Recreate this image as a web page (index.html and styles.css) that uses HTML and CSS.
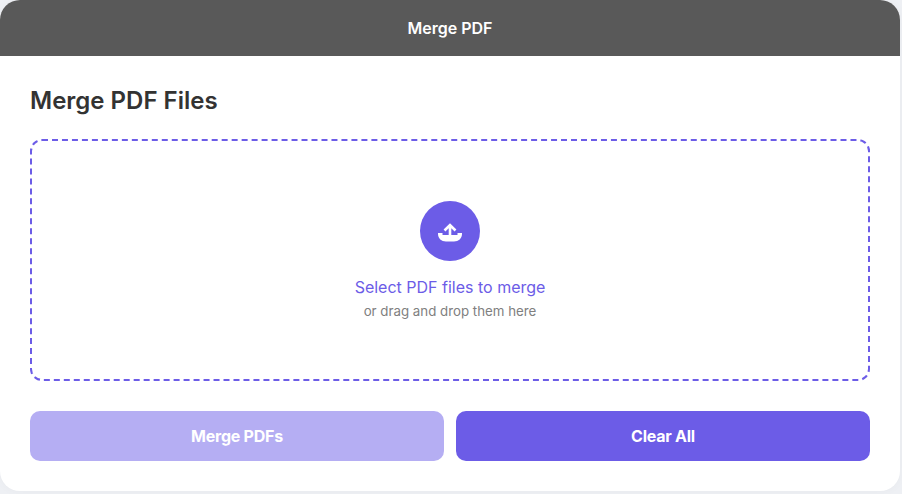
FILE: index.html
```html
<!DOCTYPE html>
<html lang="en">
<head>
    <meta charset="UTF-8">
    <meta name="viewport" content="width=device-width, initial-scale=1.0">
    <title>Merge PDF</title>
    <link rel="stylesheet" href="styles.css">
</head>
<body>

<div class="card">
    <div class="card-header">Merge PDF</div>

    <div class="card-body">
        <h2>Merge PDF Files</h2>

        <!-- Upload area -->
        <div class="drop-zone">
            <div class="upload-icon">
                <svg width="26" height="22" viewBox="0 0 26 22">
                    <path d="M1 13h4.500v2h15v-2H25v1c0 4.500-3.500 7.500-8 7.500H9c-4.500 0-8-3-8-7.500z" fill="#fff"/>
                    <path d="M13 16V5.500M7.500 10.500L13 5l5.500 5.500" fill="none" stroke="#fff" stroke-width="2.600"/>
                </svg>
            </div>
            <p class="drop-title">Select PDF files to merge</p>
            <p class="drop-hint">or drag and drop them here</p>
        </div>

        <!-- Buttons -->
        <div class="actions">
            <button type="button" class="btn btn-disabled">Merge PDFs</button>
            <button type="button" class="btn">Clear All</button>
        </div>
    </div>
</div>

</body>
</html>
```

FILE: styles.css
```css
body {
    margin: 0;
    height: 494px;
    overflow: hidden;
    background-color: #eef0f4;
    font-family: Inter, "Liberation Sans", sans-serif;
}
.card {
    width: 900px;
    background-color: #fff;
    border-radius: 20px;
    overflow: hidden;
    box-shadow: 0 0 10px rgba(0, 0, 0, 0.03);
}
.card-header {
    height: 56px;
    display: flex;
    align-items: center;
    justify-content: center;
    background-color: #595959;
    color: #fff;
    font-size: 16px;
    font-weight: 600;
}
.card-body {
    padding: 30px;
}
h2 {
    margin: 0 0 24px;
    height: 29px;
    line-height: 29px;
    color: #333;
    font-size: 24px;
    font-weight: 600;
}
.drop-zone {
    box-sizing: border-box;
    height: 242px;
    padding-top: 1px;
    display: flex;
    flex-direction: column;
    align-items: center;
    justify-content: center;
    border: 2px dashed #6c5ce7;
    border-radius: 12px;
}
.upload-icon {
    width: 60px;
    height: 60px;
    display: flex;
    align-items: center;
    justify-content: center;
    margin-bottom: 15px;
    border-radius: 50%;
    background-color: #6c5ce7;
}
.drop-title {
    margin: 0 0 4px;
    color: #6c5ce7;
    font-size: 16px;
    line-height: 22px;
}
.drop-hint {
    margin: 0;
    color: #808080;
    font-size: 13.3px;
    line-height: 18px;
}
.actions {
    display: flex;
    gap: 12px;
    margin-top: 30px;
}
.btn {
    flex: 1;
    height: 50px;
    border: none;
    border-radius: 10px;
    background-color: #6c5ce7;
    color: #fff;
    font-family: inherit;
    font-size: 16px;
    font-weight: 700;
    letter-spacing: -0.25px;
}
.btn-disabled {
    background-color: #b5aef3;
}
```
